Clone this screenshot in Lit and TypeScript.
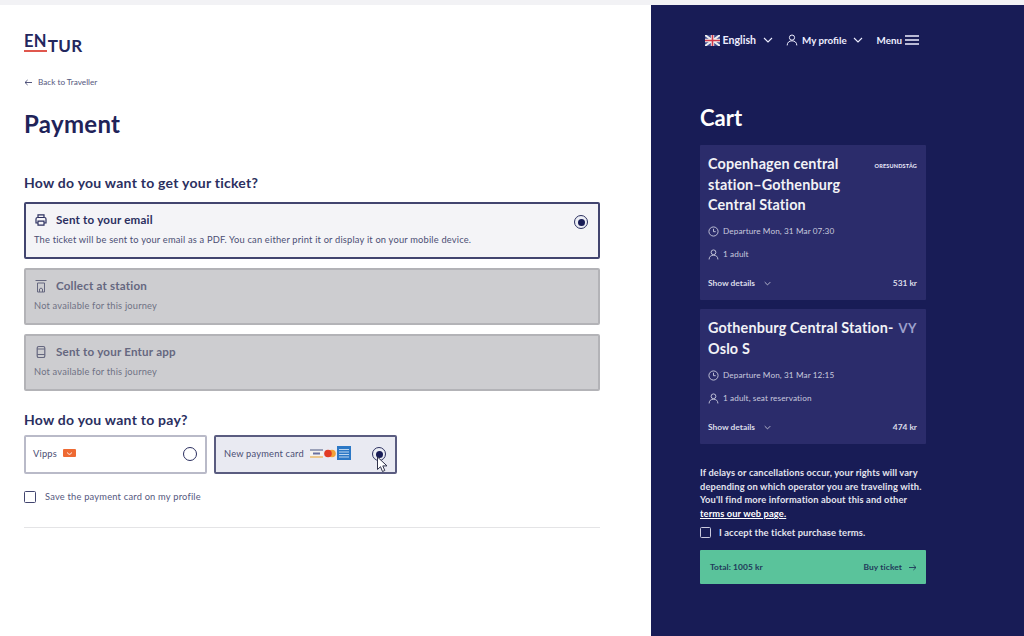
import { LitElement, html, css } from "lit";
import { customElement } from "lit/decorators.js";

const chev = html`<svg class="chev" viewBox="0 0 10 6" width="10" height="6"><path d="M1 1l4 4 4-4" fill="none" stroke="currentColor" stroke-width="1.1"/></svg>`;
const person = (s: number) => html`<svg viewBox="0 0 12 12" width=${s} height=${s}><circle cx="6" cy="3.6" r="2.6" fill="none" stroke="currentColor" stroke-width="1"/><path d="M1.2 11.4c0-3 2-4.600 4.800-4.600s4.800 1.600 4.800 4.600" fill="none" stroke="currentColor" stroke-width="1"/></svg>`;
const clock = html`<svg viewBox="0 0 12 12" width="11" height="11"><circle cx="6" cy="6" r="5" fill="none" stroke="currentColor" stroke-width="1"/><path d="M6 3v3.200h2.400" fill="none" stroke="currentColor" stroke-width="1"/></svg>`;

@customElement("app-root")
export class AppRoot extends LitElement {
  static styles = css`
    :host { display: block; width: 1024px; height: 636px; overflow: hidden; font-family: Lato, "Liberation Sans", sans-serif; color: #181c56; background: #fff; }
    .strip { height: 5px; background: #f2f2f5; }
    .page { display: flex; height: 631px; }
    .left { width: 651px; box-sizing: border-box; padding: 27px 51px 0 24px; }
    .right { width: 373px; box-sizing: border-box; background: #181c56; color: #fff; padding: 0 98px 0 49px; }

    .logo { display: flex; align-items: flex-end; height: 21px; font-weight: 700; line-height: 1; }
    .logo .en { font-size: 16.500px; border-bottom: 2px solid #e0574d; line-height: 15px; margin-bottom: 1px; padding-bottom: 1px; color: #23275e; letter-spacing: .3px; }
    .logo .tur { font-size: 17px; margin-left: 1px; line-height: 14px; color: #23275e; letter-spacing: .3px; }
    .back { display: flex; align-items: center; gap: 6px; margin-top: 23px; height: 12px; font-size: 8.200px; color: #55587e; }
    h1 { margin: 21px 0 0; font-size: 24px; line-height: 30px; font-weight: 700; letter-spacing: .3px; color: #1f2359; }
    h2 { margin: 0; font-size: 14px; line-height: 18px; font-weight: 700; color: #2b2f5f; letter-spacing: .25px; }
    .h-ticket { margin-top: 35px; }
    .opts { display: flex; flex-direction: column; gap: 9px; margin-top: 10px; }
    .opt { height: 57px; box-sizing: border-box; border: 2px solid #b3b3b7; border-radius: 2px; background: #cdcdd0; padding: 7px 8px 0 8px; display: flex; flex-direction: column; color: #65677f; }
    .opt.on { background: #f4f4f7; border-color: #42456f; color: #2b2f5f; }
    .opt .row { display: flex; align-items: center; gap: 8px; height: 17px; font-size: 11.600px; font-weight: 700; letter-spacing: .2px; }
    .opt .row svg { width: 14px; height: 14px; margin-left: 0; }
    .opt p { margin: 6px 0 0; font-size: 9.300px; line-height: 12px; color: #4b4e73; letter-spacing: .19px; white-space: nowrap; }
    .opt:not(.on) p { color: #6f7184; }
    .radio { width: 14px; height: 14px; box-sizing: border-box; border-radius: 50%; border: 1.600px solid #2b2f5f; background: #fff; flex: none; }
    .radio.on { display: flex; align-items: center; justify-content: center; background: #eceef5; }
    .radio.on::after { content: ""; width: 7px; height: 7px; border-radius: 50%; background: #181c56; }
    .opt-radio { margin-left: auto; margin-right: 2px; margin-top: 5px; }
    .h-pay { margin-top: 20px; }
    .pays { display: flex; gap: 7px; margin-top: 6px; }
    .pay { height: 39px; width: 183px; box-sizing: border-box; border: 2px solid #b9bac8; border-radius: 2px; display: flex; align-items: center; padding: 0 8px 3px; font-size: 9.300px; color: #4b4e73; letter-spacing: .2px; position: relative; }
    .pay.vipps { background: #fff; padding-left: 7px; }
    .pay.card { background: #e9eaf2; border-color: #5a5c80; }
    .pay .radio { margin-left: auto; margin-top: 2px; }
    .vippslogo { margin-left: 6px; width: 13px; height: 8px; background: #ee6a33; border-radius: 1px; display: flex; align-items: center; justify-content: center; }
    .brands { display: flex; align-items: center; gap: 1px; margin-left: 6px; }
    .card .radio { margin-right: 1px; }
    .cursor { position: absolute; right: 6px; top: 19px; }
    .save { display: flex; align-items: center; gap: 9px; margin-top: 16px; font-size: 9.300px; color: #55587e; letter-spacing: .21px; height: 13px; }
    .box { width: 12px; height: 12px; box-sizing: border-box; border: 1.500px solid #42456f; border-radius: 1.500px; flex: none; }
    hr { border: 0; height: 1px; background: #e4e4e6; margin: 24px 0 0; }

    .nav { display: flex; align-items: center; justify-content: flex-end; height: 14px; margin-top: 28px; margin-right: 7px; font-size: 9.800px; font-weight: 700; color: #eef; white-space: nowrap; }
    .nav span { display: inline-flex; align-items: center; }
    .nav .lang-name { margin-left: 3px; font-size: 10.600px; }
    .nav .chev { margin-left: 7px; }
    .nav .prof { margin-left: 13px; gap: 4px; }
    .nav .prof .chev { margin-left: 2px; }
    .nav .menu { margin-left: 14px; gap: 3px; }
    .cart { margin: 57px 0 0; font-size: 22px; line-height: 28px; font-weight: 700; color: #fff; letter-spacing: 0; }
    .tk { background: #2b2c6b; border-radius: 1px; padding: 9px 9px 0 8px; box-sizing: border-box; }
    .tk1 { height: 155px; margin-top: 13px; }
    .tk2 { height: 135px; margin-top: 9px; }
    .tk .head { display: flex; justify-content: space-between; }
    .tk h3 { margin: 0; font-size: 14.400px; line-height: 20.700px; font-weight: 700; color: #f2f2f6; letter-spacing: .15px; }
    .tk1 h3 { width: 150px; }
    .op { font-size: 5.500px; font-weight: 700; margin-top: 9px; letter-spacing: .2px; white-space: nowrap; color: #eef; }
    .op.vy { font-size: 13px; margin-top: 2px; color: #9da0cc; letter-spacing: .5px; }
    .line { display: flex; align-items: center; gap: 4px; font-size: 8.200px; color: #c9cade; height: 12px; letter-spacing: .1px; }
    .line svg { flex: none; }
    .l1 { margin-top: 9px; }
    .l2 { margin-top: 11px; }
    .tk2 .l1 { margin-top: 10px; }
    .foot { display: flex; justify-content: space-between; align-items: center; height: 12px; margin-top: 17px; font-size: 8.400px; font-weight: 700; color: #dcdde8; }
    .foot .show { display: flex; align-items: center; }
    .foot .chev { margin-left: 9px; width: 7px; height: 5px; }
    .note { margin: 22px 0 0; font-size: 9.300px; line-height: 13.600px; color: #e4e4ee; letter-spacing: .13px; font-weight: 700; white-space: nowrap; }
    .note u { color: #fff; }
    .accept { display: flex; align-items: center; gap: 8px; margin-top: 6px; height: 13px; font-size: 9.400px; font-weight: 700; color: #e4e4ee; letter-spacing: .1px; }
    .accept .box { border-color: #c9cade; width: 11px; height: 11px; }
    .buy { display: flex; align-items: center; justify-content: space-between; height: 34px; margin-top: 11px; background: #5ac39b; padding: 0 9px 0 10px; border-radius: 1px; font-size: 8.400px; color: #1f3a5a; font-weight: 700; letter-spacing: .1px; }
    .buy span { display: flex; align-items: center; gap: 7px; }
  `;

  render() {
    const flag = html`<svg width="15" height="11" viewBox="0 0 15 11"><rect width="15" height="11" fill="#3d4a8f"/><path d="M0 0l15 11M15 0L0 11" stroke="#eee" stroke-width="2"/><path d="M7.500 0v11M0 5.500h15" stroke="#eee" stroke-width="3.400"/><path d="M7.500 0v11M0 5.500h15" stroke="#d0394a" stroke-width="1.600"/></svg>`;
    return html`
      <div class="strip"></div>
      <div class="page">
        <main class="left">
          <div class="logo"><span class="en">EN</span><span class="tur">TUR</span></div>
          <div class="back">
            <svg width="8" height="7" viewBox="0 0 8 7"><path d="M8 3.500H1M3.600 1L1 3.500 3.600 6" fill="none" stroke="#42456f" stroke-width=".9"/></svg>
            Back to Traveller
          </div>
          <h1>Payment</h1>
          <h2 class="h-ticket">How do you want to get your ticket?</h2>
          <div class="opts">
            <div class="opt on">
              <div class="row">
                <svg viewBox="0 0 14 14"><path d="M4 4.500V1.800h6v2.700M4 10H2V6a1.500 1.500 0 011.500-1.500h7A1.500 1.500 0 0112 6v4h-2M4 8.200h6v4H4z" fill="none" stroke="#2b2f5f" stroke-width="1.200"/></svg>
                Sent to your email
                <span class="radio on opt-radio"></span>
              </div>
              <p>The ticket will be sent to your email as a PDF. You can either print it or display it on your mobile device.</p>
            </div>
            <div class="opt">
              <div class="row">
                <svg viewBox="0 0 14 14"><path d="M1.500 1.500h11M3.500 4h7v9h-7zM5.500 13V10l1.500-1 1.500 1v3" fill="none" stroke="#65677f" stroke-width="1"/></svg>
                Collect at station
              </div>
              <p>Not available for this journey</p>
            </div>
            <div class="opt">
              <div class="row">
                <svg viewBox="0 0 14 14"><rect x="3.200" y="1.500" width="7.600" height="11" rx="1.600" fill="none" stroke="#65677f" stroke-width="1.200"/><path d="M3.200 9.500h7.600M3.200 4h7.600" stroke="#65677f" stroke-width="1"/></svg>
                Sent to your Entur app
              </div>
              <p>Not available for this journey</p>
            </div>
          </div>
          <h2 class="h-pay">How do you want to pay?</h2>
          <div class="pays">
            <div class="pay vipps">
              Vipps
              <span class="vippslogo"><svg width="7" height="5" viewBox="0 0 7 5"><path d="M1.500 1.500c.6 2.400 3.400 2.400 4 0" fill="none" stroke="#fff" stroke-width="1"/></svg></span>
              <span class="radio"></span>
            </div>
            <div class="pay card">
              New payment card
              <span class="brands">
                <svg width="13" height="9" viewBox="0 0 13 9"><rect width="13" height="9" fill="#f4f2ee"/><rect width="13" height="2" fill="#9aa0b8"/><rect y="7" width="13" height="2" fill="#ebc78e"/><rect x="3" y="3.500" width="7" height="2" fill="#6a71a0"/></svg>
                <svg width="12" height="9" viewBox="0 0 12 9"><circle cx="8" cy="4.500" r="3.800" fill="#f2a33a"/><circle cx="4" cy="4.500" r="3.800" fill="#e23b24"/></svg>
                <svg width="14" height="14" viewBox="0 0 14 14"><rect width="14" height="14" fill="#2c78c6"/><path d="M2 3h10v1H2zM2 5.500h10v1H2zM2 8h10v1H2zM2 10.500h10v1H2z" fill="#bcd6ef"/></svg>
              </span>
              <span class="radio on"></span>
              <svg class="cursor" width="13" height="17" viewBox="0 0 13 17"><path d="M1.500 1v12.500l3-2.800 2 4.800 2.300-1-2-4.600h4.200z" fill="#fff" stroke="#30324a" stroke-width="1"/></svg>
            </div>
          </div>
          <div class="save"><span class="box"></span>Save the payment card on my profile</div>
          <hr />
        </main>
        <aside class="right">
          <nav class="nav">
            <span>${flag}<span class="lang-name">English</span>${chev}</span>
            <span class="prof">${person(12)}My profile${chev}</span>
            <span class="menu">Menu<svg width="14" height="10" viewBox="0 0 14 10"><path d="M0 1h14M0 5h14M0 9h14" stroke="#eef" stroke-width="1.300"/></svg></span>
          </nav>
          <h2 class="cart">Cart</h2>
          <section class="tk tk1">
            <div class="head"><h3>Copenhagen central station–Gothenburg Central Station</h3><span class="op">ORESUNDSTÅG</span></div>
            <div class="line l1">${clock}Departure Mon, 31 Mar 07:30</div>
            <div class="line l2">${person(11)}1 adult</div>
            <div class="foot"><span class="show">Show details${chev}</span><span>531 kr</span></div>
          </section>
          <section class="tk tk2">
            <div class="head"><h3>Gothenburg Central Station-<br />Oslo S</h3><span class="op vy">VY</span></div>
            <div class="line l1">${clock}Departure Mon, 31 Mar 12:15</div>
            <div class="line l2">${person(11)}1 adult, seat reservation</div>
            <div class="foot"><span class="show">Show details${chev}</span><span>474 kr</span></div>
          </section>
          <p class="note">If delays or cancellations occur, your rights will vary<br />depending on which operator you are traveling with.<br />You'll find more information about this and other<br /><u>terms our web page.</u></p>
          <div class="accept"><span class="box"></span>I accept the ticket purchase terms.</div>
          <div class="buy"><span>Total: 1005 kr</span><span>Buy ticket <svg width="8" height="7" viewBox="0 0 8 7"><path d="M0 3.500h7M4.400 1L7 3.500 4.400 6" fill="none" stroke="#1f3a5a" stroke-width=".9"/></svg></span></div>
        </aside>
      </div>
    `;
  }
}
